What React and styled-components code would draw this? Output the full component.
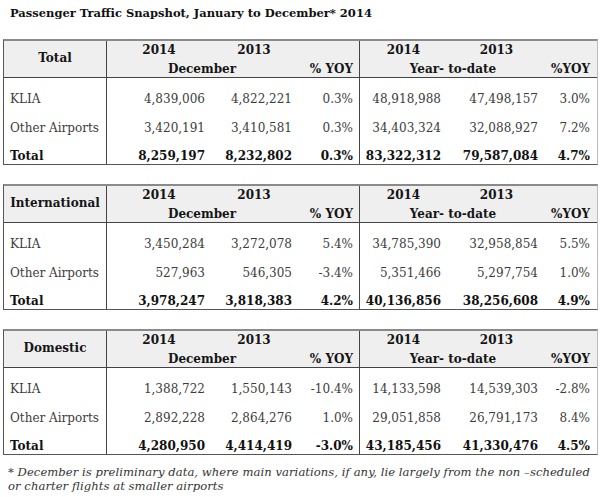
import styled, { createGlobalStyle } from "styled-components"

const GlobalStyle = createGlobalStyle`
  * { box-sizing: border-box; }
  body {
    margin: 0;
    background: #fff;
    font-family: "DejaVu Serif", "Liberation Serif", serif;
    color: #333;
  }
`

const sections = [
  {
    label: "Total",
    rows: [
      ["KLIA", "4,839,006", "4,822,221", "0.3%", "48,918,988", "47,498,157", "3.0%"],
      ["Other Airports", "3,420,191", "3,410,581", "0.3%", "34,403,324", "32,088,927", "7.2%"],
    ],
    total: ["Total", "8,259,197", "8,232,802", "0.3%", "83,322,312", "79,587,084", "4.7%"],
  },
  {
    label: "International",
    rows: [
      ["KLIA", "3,450,284", "3,272,078", "5.4%", "34,785,390", "32,958,854", "5.5%"],
      ["Other Airports", "527,963", "546,305", "-3.4%", "5,351,466", "5,297,754", "1.0%"],
    ],
    total: ["Total", "3,978,247", "3,818,383", "4.2%", "40,136,856", "38,256,608", "4.9%"],
  },
  {
    label: "Domestic",
    rows: [
      ["KLIA", "1,388,722", "1,550,143", "-10.4%", "14,133,598", "14,539,303", "-2.8%"],
      ["Other Airports", "2,892,228", "2,864,276", "1.0%", "29,051,858", "26,791,173", "8.4%"],
    ],
    total: ["Total", "4,280,950", "4,414,419", "-3.0%", "43,185,456", "41,330,476", "4.5%"],
  },
]

// right padding per column so the numbers line up like the original
const pads = [0, 6, 5, 6, 6, 8, 7]

function App() {
  function renderRow(row, bold, key) {
    return row.map((value, i) => (
      <Cell
        key={key + i}
        $first={i === 0}
        $divider={i === 0 || i === 3}
        $pad={pads[i]}
        $bold={bold}
      >
        {value}
      </Cell>
    ))
  }

  return (
    <>
      <GlobalStyle />
      <Page>
        <Title>Passenger Traffic Snapshot, January to December* 2014</Title>
        {sections.map((section) => (
          <Table key={section.label}>
            <LabelHead>{section.label}</LabelHead>
            <YearHead>2014</YearHead>
            <YearHead>2013</YearHead>
            <Blank $divider />
            <YearHead>2014</YearHead>
            <YearHead>2013</YearHead>
            <Blank />
            <PeriodHead $span={2}>December</PeriodHead>
            <YoyHead $divider $pad={pads[3]}>% YOY</YoyHead>
            <PeriodHead $span={2}>Year- to-date</PeriodHead>
            <YoyHead $pad={pads[6]}>%YOY</YoyHead>
            {section.rows.map((row, r) => renderRow(row, false, "r" + r))}
            {renderRow(section.total, true, "t")}
          </Table>
        ))}
        <Note>
          <NoteLine>* December is preliminary data, where main variations, if any, lie largely from the non –scheduled</NoteLine>
          <NoteLine>or charter flights at smaller airports</NoteLine>
        </Note>
      </Page>
    </>
  )
}

export default App

const Page = styled.div`
  width: 600px;
  padding: 5px 3px 0 3px;
`

const Title = styled.div`
  margin-left: 7px;
  height: 16px;
  line-height: 16px;
  font-size: 11.5px;
  font-weight: bold;
  color: #111;
  margin-bottom: 18px;
`

const Table = styled.div`
  display: grid;
  grid-template-columns: 103px 104px 86px 63px 87px 99px 51px;
  grid-template-rows: 19px 18px 29px 29px 28px;
  width: 595px;
  border-top: 2px solid #8a8a8a;
  border-left: 1px solid #555;
  border-right: 1px solid #bbb;
  border-bottom: 1px solid #555;
  margin-bottom: 19px;
  font-size: 12px;
`

const HeadBase = styled.div`
  background: #efefef;
  font-weight: bold;
  color: #151515;
  font-size: 12px;
  line-height: 15px;
  display: flex;
  align-items: center;
  border-right: ${(p) => (p.$divider ? "1px solid #444" : "none")};
`

const LabelHead = styled(HeadBase)`
  grid-row: span 2;
  justify-content: center;
  border-right: 1px solid #444;
  border-bottom: 1px solid #444;
  padding-bottom: 1px;
`

const YearHead = styled(HeadBase)`
  justify-content: center;
`

const Blank = styled(HeadBase)``

const PeriodHead = styled(HeadBase)`
  grid-column: span ${(p) => p.$span};
  justify-content: center;
  border-bottom: 1px solid #444;
  padding-top: 2px;
`

const YoyHead = styled(HeadBase)`
  justify-content: flex-end;
  padding-right: ${(p) => p.$pad}px;
  border-bottom: 1px solid #444;
  padding-top: 2px;
`

const Cell = styled.div`
  display: flex;
  align-items: flex-end;
  justify-content: ${(p) => (p.$first ? "flex-start" : "flex-end")};
  padding-left: ${(p) => (p.$first ? "6px" : "0")};
  padding-right: ${(p) => p.$pad}px;
  padding-bottom: 0;
  line-height: 15px;
  font-size: 12px;
  font-weight: ${(p) => (p.$bold ? "bold" : "normal")};
  color: ${(p) => (p.$bold ? "#111" : "#3c3c3c")};
  border-right: ${(p) => (p.$divider ? "1px solid #444" : "none")};
  white-space: nowrap;
`

const Note = styled.div`
  margin-top: -8px;
  padding-left: 5px;
  font-style: italic;
  font-size: 11.6px;
  letter-spacing: 0.05px;
  line-height: 13.5px;
  color: #333;
`

const NoteLine = styled.div`
  white-space: nowrap;
`
